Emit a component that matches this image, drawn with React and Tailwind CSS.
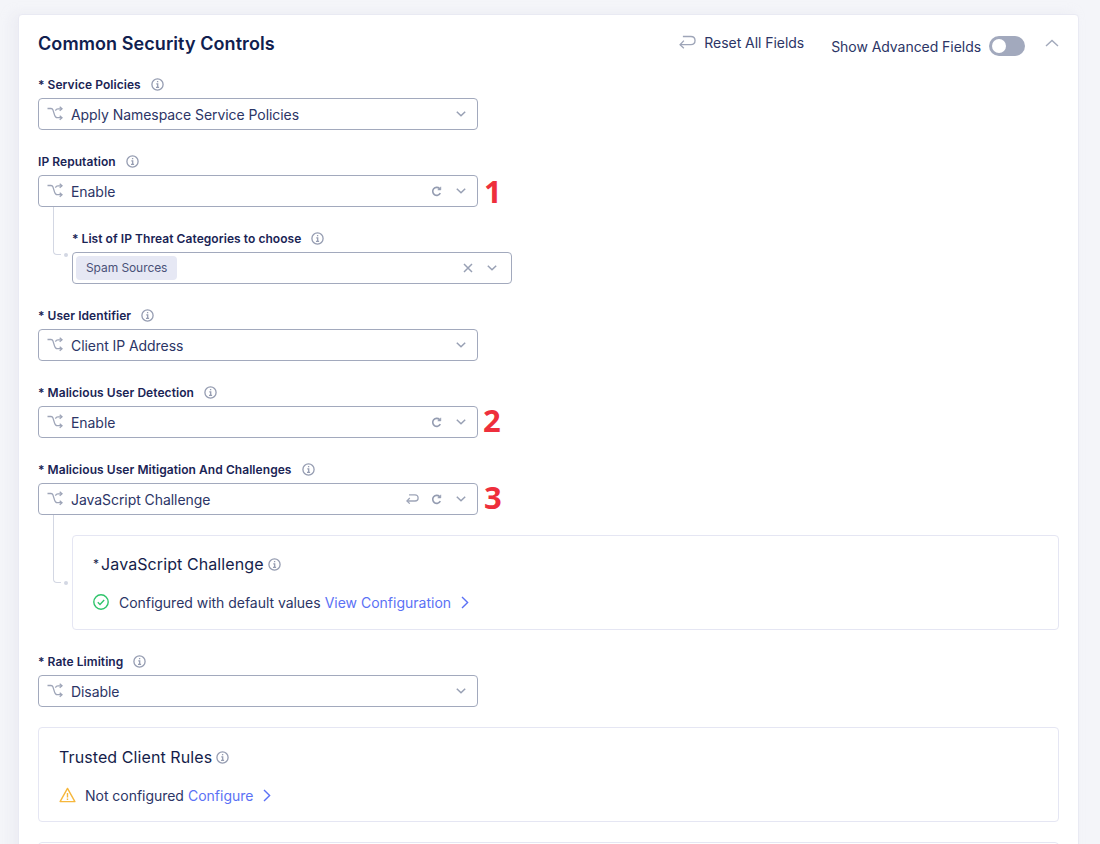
const ink = "#1a2455";

function Info({ className = "" }) {
  return (
    <svg width="13" height="13" viewBox="0 0 13 13" fill="none" className={className}>
      <circle cx="6.5" cy="6.5" r="5.6" stroke="#959cb1" strokeWidth="1.3" />
      <path d="M6.6 3v1.3M5.3 5.9h1.4v3.3M5 9.4h3.1" stroke="#959cb1" strokeWidth="1.3" />
    </svg>
  );
}

function Shuffle() {
  return (
    <svg width="16" height="16" viewBox="0 0 16 16" fill="none" stroke="#9ea5b8" strokeWidth="1.3">
      <path d="M.5 2.5H4c1 0 1.6.6 2 1.6l1.6 5c.4 1.4 1.2 2.6 2.6 2.6H15" />
      <path d="M8.4 4.6C9 3.4 10 2.8 11 2.8H15" />
      <path d="M12.7.8 15 2.8l-2.3 2M12.7 9.7l2.3 2-2.3 2" />
    </svg>
  );
}

function Chevron() {
  return (
    <svg width="10" height="6" viewBox="0 0 10 6" fill="none" stroke="#98a0b4" strokeWidth="1.5">
      <path d="M.8.8 5 4.8 9.2.8" />
    </svg>
  );
}

function Refresh() {
  return (
    <svg width="11" height="11" viewBox="0 0 11 11" fill="none" stroke="#949cb1" strokeWidth="1.6">
      <path d="M9.3 7.2A4 4 0 1 1 8.6 2.6" />
      <path d="M9.8.7v3.2H6.6" fill="#949cb1" strokeWidth="0.6" />
    </svg>
  );
}

function Undo({ w = 14, h = 11, sw = 1.2 }) {
  return (
    <svg width={w} height={h} viewBox="0 0 14 11" fill="none" stroke="#9ea5b8" strokeWidth={sw}>
      <path d="M.9 7.7h8.9c2 0 3.4-1.3 3.4-3.4S11.8 1 9.8 1H3.2" />
      <path d="M4 4.4.9 7.7 4 10.6" />
    </svg>
  );
}

function ChevronRight() {
  return (
    <svg width="8" height="13" viewBox="0 0 8 13" fill="none" stroke="#5b71f5" strokeWidth="1.4">
      <path d="M1 1l5.6 5.5L1 12" />
    </svg>
  );
}

function Label({ children, required }) {
  return (
    <div className="mb-1 flex h-5 items-center pt-[2px] text-[12px] font-semibold tracking-[0.06px]" style={{ color: ink }}>
      {required && <span className="mr-[3px]">*</span>}
      <span>{children}</span>
      <Info className="ml-[10px] -mt-[1px]" />
    </div>
  );
}

function Select({ value, refresh, undo }) {
  return (
    <div className="flex h-8 w-[440px] shrink-0 items-center rounded-[4px] border border-[#a2a9bd] bg-white pl-2 pr-[11px]">
      <Shuffle />
      <span className="ml-2 flex-1 text-[14px] tracking-[-0.06px] text-[#2c3566]">{value}</span>
      {undo && <span className="mr-[12px] flex"><Undo w={13} h={10} sw={1.4} /></span>}
      {refresh && <span className="mr-[14px] flex"><Refresh /></span>}
      <Chevron />
    </div>
  );
}

function Mark({ children, className = "ml-[6px]" }) {
  return (
    <span className={`text-[31px] font-bold leading-8 text-[#ee2f3c] ${className}`} style={{ fontFamily: '"Open Sans", sans-serif' }}>
      {children}
    </span>
  );
}

function Connector({ height }) {
  return (
    <div className={`absolute left-[15px] w-[8px] rounded-bl-[4px] border-b border-l border-[#d3d7e3] ${height}`}>
      <span className="absolute -bottom-[2.5px] -right-[7px] h-[4px] w-[4px] rounded-full bg-[#d3d7e3]" />
    </div>
  );
}

function Status({ icon, text, link, gap = "ml-[10px]" }) {
  return (
    <div className="flex h-5 items-center text-[14px] text-[#2c3566]">
      {icon}
      <span className={`${gap} tracking-[-0.03px]`}>{text}</span>
      <span className="ml-1 text-[#5b71f5]">{link}</span>
      <span className="ml-[10px] flex"><ChevronRight /></span>
    </div>
  );
}

function Box({ title, star, status, padding = "pt-4 pb-[17px]" }) {
  return (
    <div className={`rounded-[4px] border border-[#e5e6f3] bg-white px-5 ${padding}`}>
      <div className="flex h-6 items-center text-[16px] tracking-[0.09px]" style={{ color: "#151d4a" }}>
        {star && <span className="mr-[2px] text-[12px]">*</span>}
        <span>{title}</span>
        <Info className="ml-[4px]" />
      </div>
      <div className="mt-[16px]">{status}</div>
    </div>
  );
}

const Check = (
  <svg width="16" height="16" viewBox="0 0 16 16" fill="none" stroke="#2fc46b" strokeWidth="1.4">
    <circle cx="8" cy="8" r="7.2" />
    <path d="M4.8 8.2l2.2 2.2 4.2-4.4" />
  </svg>
);

const Warn = (
  <svg width="17" height="16" viewBox="0 0 17 16" fill="none" stroke="#f6b73c" strokeWidth="1.4">
    <path d="M8.5 1.4 15.9 14.6H1.1L8.5 1.4Z" strokeLinejoin="round" />
    <path d="M8.5 6v4.6M8.5 11.6v1.3" />
  </svg>
);

export default function App() {
  return (
    <div className="h-[844px] w-[1100px] overflow-hidden bg-[#f4f5f9] pl-[18px] pt-[14px]" style={{ fontFamily: "Inter, sans-serif" }}>
      <div className="w-[1061px] rounded-[4px] border border-[#e9eaf3] bg-white px-[19px] shadow-[-6px_0_12px_rgba(220,222,232,0.35)]">
        <header className="flex h-[59px] items-center pb-[3px]">
          <h1 className="text-[18px] font-semibold tracking-[0.08px]" style={{ color: "#10204f" }}>Common Security Controls</h1>
          <div className="mb-[2px] ml-auto flex items-center text-[14px] tracking-[-0.05px] text-[#2c3566]">
            <Undo w={17} h={14} sw={1.1} />
            <span className="ml-2">Reset All Fields</span>
          </div>
          <div className="ml-[27px] mt-[6px] flex items-center text-[14px] tracking-[-0.05px] text-[#2c3566]">
            Show Advanced Fields
            <span className="ml-2 flex h-5 w-9 items-center rounded-full bg-[#a2a9bd] pl-[3px]">
              <span className="h-[14px] w-[14px] rounded-full bg-white" />
            </span>
          </div>
          <svg width="14" height="8" viewBox="0 0 14 8" fill="none" stroke="#a2a9bb" strokeWidth="1.4" className="ml-5">
            <path d="M1 7l6-5.6L13 7" />
          </svg>
        </header>

        <div className="flex flex-col gap-[21px]">
          <div>
            <Label required>Service Policies</Label>
            <Select value="Apply Namespace Service Policies" />
          </div>

          <div>
            <Label>IP Reputation</Label>
            <div className="flex h-8 items-center">
              <Select value="Enable" refresh />
              <Mark>1</Mark>
            </div>
            <div className="relative mt-[21px] pl-[34px]">
              <Connector height="h-[48px] -top-[21px]" />
              <Label required>List of IP Threat Categories to choose</Label>
              <div className="flex h-8 w-[440px] items-center rounded-[4px] border border-[#a2a9bd] bg-white pl-[3px] pr-[14px]">
                <span className="flex h-6 items-center rounded-[4px] bg-[#e6e8f4] px-[10px] text-[12px] tracking-[-0.08px] text-[#4a5278]">Spam Sources</span>
                <svg width="10" height="10" viewBox="0 0 10 10" stroke="#98a0b4" strokeWidth="1.5" className="ml-auto mr-[14px]">
                  <path d="M1 1l8 8M9 1l-8 8" />
                </svg>
                <Chevron />
              </div>
            </div>
          </div>

          <div>
            <Label required>User Identifier</Label>
            <Select value="Client IP Address" />
          </div>

          <div>
            <Label required>Malicious User Detection</Label>
            <div className="flex h-8 items-center">
              <Select value="Enable" refresh />
              <Mark className="ml-[5px] mb-[4px]">2</Mark>
            </div>
          </div>

          <div>
            <Label required>Malicious User Mitigation And Challenges</Label>
            <div className="flex h-8 items-center">
              <Select value="JavaScript Challenge" refresh undo />
              <Mark className="ml-[6px] mb-[4px]">3</Mark>
            </div>
            <div className="relative mt-5 pl-[34px]">
              <Connector height="h-[68px] -top-5" />
              <Box title="JavaScript Challenge" star status={<Status icon={Check} text="Configured with default values" link="View Configuration" />} />
            </div>
          </div>

          <div>
            <Label required>Rate Limiting</Label>
            <Select value="Disable" />
          </div>
        </div>

        <div className="mt-5 flex flex-col gap-5">
          <Box title="Trusted Client Rules" padding="pt-[17px] pb-4" status={<Status icon={Warn} gap="ml-[9px]" text="Not configured" link="Configure" />} />
          <div className="h-10 rounded-[4px] border border-[#e5e6f3]" />
        </div>
      </div>
    </div>
  );
}
